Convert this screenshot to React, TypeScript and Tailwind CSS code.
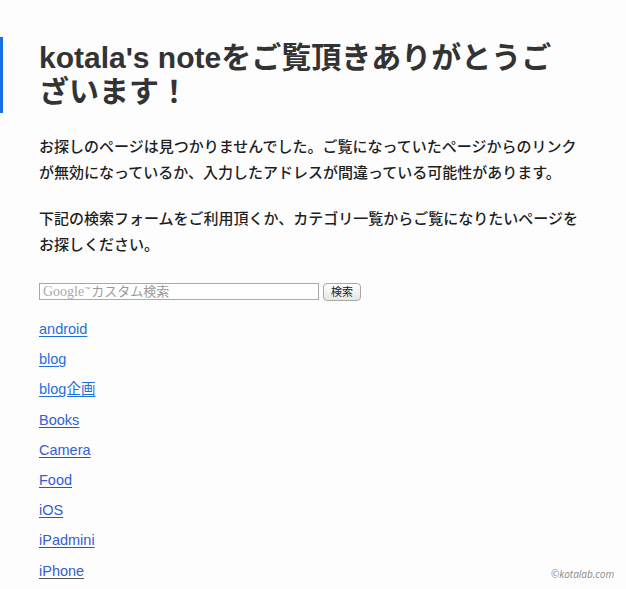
export default function App() {
  const categories = [
    { name: "android", visited: false },
    { name: "blog", visited: false },
    { name: "blog企画", visited: false },
    { name: "Books", visited: true },
    { name: "Camera", visited: true },
    { name: "Food", visited: true },
    { name: "iOS", visited: true },
    { name: "iPadmini", visited: true },
    { name: "iPhone", visited: true },
  ];

  return (
    <div className="relative w-[626px] h-[589px] overflow-hidden bg-[#fdfdfd] font-['Liberation_Sans','Noto_Sans_CJK_JP',sans-serif]">
      <div className="w-[583px] pt-[37px]">
        {/* Title */}
        <h1 className="border-l-[3px] border-[#1a6fe6] pl-[36px] pr-[20px] py-1 text-[30px] leading-[34px] font-bold text-[#333]">
          kotala's noteをご覧頂きありがとうございます！
        </h1>

        <div className="pl-[39px] pt-[21px] text-[15px] leading-[26px] font-medium text-[#1e1e1e]">
          <p>
            お探しのページは見つかりませんでした。ご覧になっていたページからのリンクが無効になっているか、入力したアドレスが間違っている可能性があります。
          </p>
          <p className="mt-[20px]">
            下記の検索フォームをご利用頂くか、カテゴリ一覧からご覧になりたいページをお探しください。
          </p>

          {/* Search form */}
          <div className="mt-[25px] flex items-start gap-[4px]">
            <div className="w-[280px] h-[17px] border border-[#a9a9a9] bg-white flex items-center px-[3px] text-[13px] leading-none text-[#9a9a9a] font-normal">
              <span className="font-['Liberation_Serif',serif] text-[14px] text-[#aaa]">Google</span>
              <span className="text-[6px] -mt-[6px] mr-[1px]">™</span>
              <span>カスタム検索</span>
            </div>
            <button className="w-[38px] h-[18px] rounded-[4px] border border-[#a8a8a8] bg-gradient-to-b from-white to-[#e6e6e6] text-[11px] leading-none text-[#222] font-normal">
              検索
            </button>
          </div>

          {/* Categories */}
          <ul className="mt-[13px] text-[14.5px] leading-[30.2px] font-normal">
            {categories.map((c) => (
              <li key={c.name}>
                <a
                  href="#"
                  className={
                    c.visited
                      ? "text-[#3560d0] underline decoration-[#555] underline-offset-[2px]"
                      : "text-[#1f6fe0] underline decoration-[#1f6fe0] underline-offset-[2px]"
                  }
                >
                  {c.name}
                </a>
              </li>
            ))}
          </ul>
        </div>
      </div>

      {/* Watermark */}
      <div className="absolute left-[551px] top-[567px] text-[10px] italic text-[#8a8a8a] font-['Open_Sans',sans-serif]">
        ©kotalab.com
      </div>
    </div>
  );
}
